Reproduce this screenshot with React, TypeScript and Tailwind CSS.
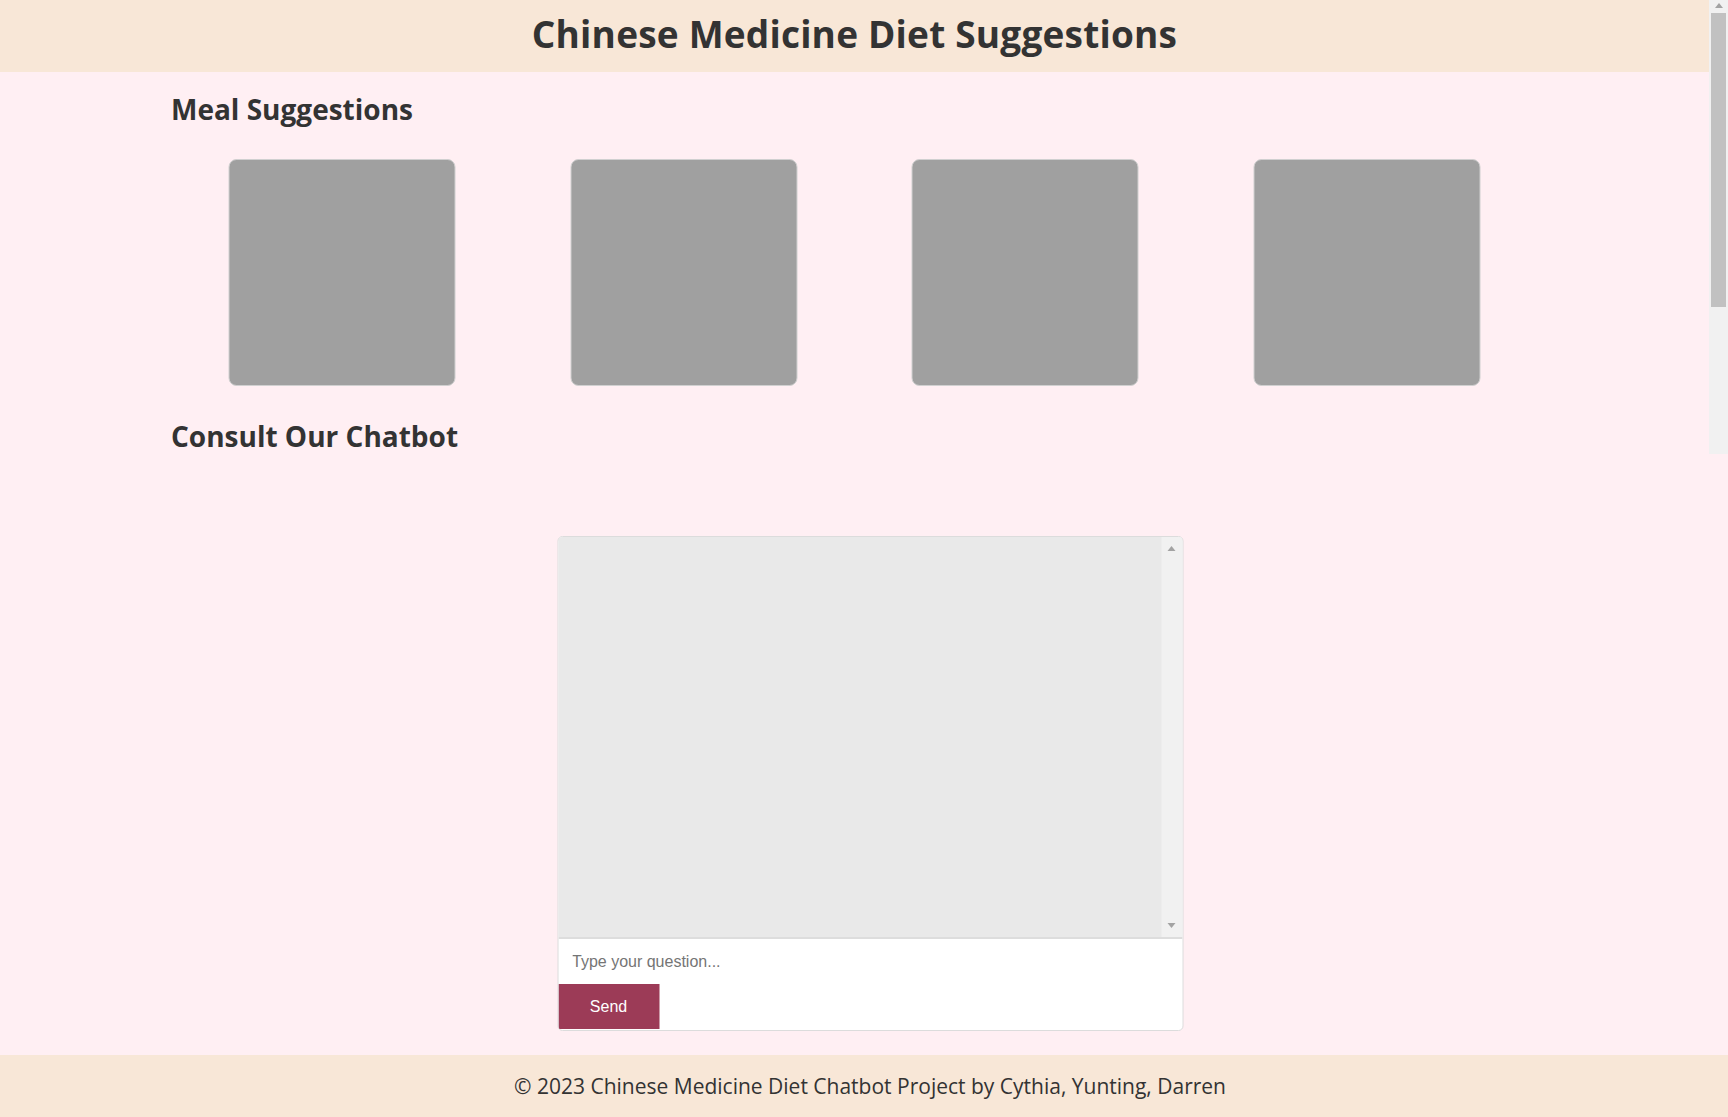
import React from "react";

const font = { fontFamily: '"Open Sans", "Noto Sans", sans-serif' };

function Scrollbar() {
  return (
    <div className="absolute right-0 top-0 flex h-[454px] w-[19px] flex-col items-center bg-[#f1f1f1]">
      <div className="mt-[3px] h-0 w-0 border-x-[4px] border-b-[5px] border-x-transparent border-b-[#a3a3a3]" />
      <div className="mt-[5px] h-[294px] w-[15px] bg-[#c1c1c1]" />
    </div>
  );
}

function Card() {
  return (
    <div className="flex justify-center">
      <div className="h-[227px] w-[227px] rounded-[8px] border border-[#d0d0d0] bg-[#a0a0a0]" />
    </div>
  );
}

export default function App() {
  return (
    <div className="relative min-h-[1117px] w-full bg-[#ffeff3] text-[#333333]" style={font}>
      <header className="flex h-[72px] w-full items-center justify-center bg-[#f8e7d7] pb-[4px] pr-[19px]">
        <h1 className="text-[37px] font-bold tracking-[0.2px]">Chinese Medicine Diet Suggestions</h1>
      </header>

      <main className="mx-auto w-[1367px] -translate-x-[9.5px]">
        <h2 className="mt-[17px] text-[28px] font-bold leading-[40px]">Meal Suggestions</h2>
        <div className="mt-[30px] grid grid-cols-4">
          <Card />
          <Card />
          <Card />
          <Card />
        </div>
        <h2 className="mt-[30px] text-[28px] font-bold leading-[40px]">Consult Our Chatbot</h2>

        <div className="ml-[386px] mt-[80px] flex h-[495px] w-[626px] flex-col overflow-hidden rounded-[5px] border border-[#dcdcdc] bg-white">
          <div className="flex h-[402px] border-b-2 border-[#dddddd] bg-[#e9e9e9]">
            <div className="flex-1" />
            <div className="flex w-[21px] flex-col items-center justify-between bg-[#f1f1f1] py-[9px]">
              <div className="h-0 w-0 border-x-[4px] border-b-[5px] border-x-transparent border-b-[#a3a3a3]" />
              <div className="h-0 w-0 border-x-[4px] border-t-[5px] border-x-transparent border-t-[#a3a3a3]" />
            </div>
          </div>
          <input
            className="h-[45px] w-full px-[14px] text-[16px] text-[#333] outline-none placeholder:text-[#757575]"
            style={{ fontFamily: '"Liberation Sans", Arial, sans-serif' }}
            placeholder="Type your question..."
          />
          <button
            className="h-[45px] w-[101px] bg-[#9c3b57] text-[16px] text-white"
            style={{ fontFamily: '"Liberation Sans", Arial, sans-serif' }}
          >
            Send
          </button>
        </div>
      </main>

      <footer className="mt-[24px] flex h-[62px] w-full items-center justify-center bg-[#f8e7d7] pl-[12px] pt-[2px]">
        <p className="text-[21px]">© 2023 Chinese Medicine Diet Chatbot Project by Cythia, Yunting, Darren</p>
      </footer>

      <Scrollbar />
    </div>
  );
}
